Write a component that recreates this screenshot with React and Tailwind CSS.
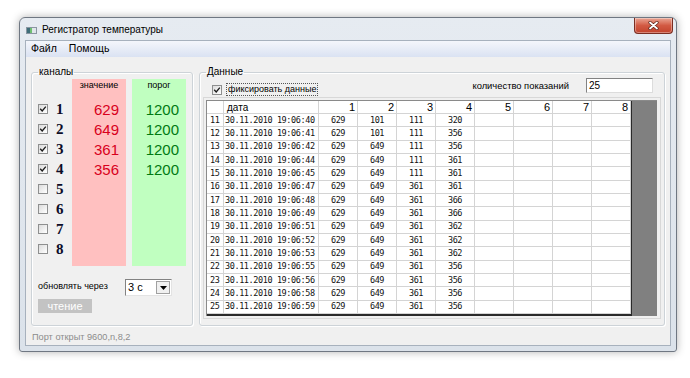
import React from "react";

const channels = [
  { n: 1, on: true, v: 629 },
  { n: 2, on: true, v: 649 },
  { n: 3, on: true, v: 361 },
  { n: 4, on: true, v: 356 },
  { n: 5, on: false },
  { n: 6, on: false },
  { n: 7, on: false },
  { n: 8, on: false },
];

const rows = [
  [11, "40", 629, 101, 111, 320],
  [12, "41", 629, 101, 111, 356],
  [13, "42", 629, 649, 111, 356],
  [14, "44", 629, 649, 111, 361],
  [15, "45", 629, 649, 111, 361],
  [16, "47", 629, 649, 361, 361],
  [17, "48", 629, 649, 361, 366],
  [18, "49", 629, 649, 361, 366],
  [19, "51", 629, 649, 361, 362],
  [20, "52", 629, 649, 361, 362],
  [21, "53", 629, 649, 361, 362],
  [22, "55", 629, 649, 361, 356],
  [23, "56", 629, 649, 361, 356],
  [24, "58", 629, 649, 361, 356],
  [25, "59", 629, 649, 361, 356],
];

const mono = "font-['DejaVu_Sans_Mono',monospace] text-[8.5px] tracking-[-0.4px] text-[#111]";

function Check({ on }) {
  return (
    <span className="flex h-[10px] w-[10px] shrink-0 items-center justify-center border border-[#8e8f8f] bg-gradient-to-br from-[#dcdcdc] to-white">
      {on && (
        <svg width="8" height="8" viewBox="0 0 8 8">
          <path d="M1.2 3.8 L3.2 6 L6.8 1.6" fill="none" stroke="#1a1a1a" strokeWidth="1.3" />
        </svg>
      )}
    </span>
  );
}

function Cell({ w, children, className = "" }) {
  return (
    <div className={"flex h-full shrink-0 items-center whitespace-nowrap border-r border-[#d4d4d4] " + w + " " + className}>
      {children}
    </div>
  );
}

export default function App() {
  return (
    <div className="h-[378px] w-[690px] bg-white pl-[19px] pt-[17px] font-['Liberation_Sans',sans-serif] text-black">
      <div className="flex h-[335px] w-[658px] flex-col rounded-t-[6px] rounded-b-[3px] border border-[#6f7782] bg-gradient-to-b from-[#e6ebf1] to-[#dbe2ea] shadow-[0_0_9px_rgba(0,0,0,0.3)]">
        {/* title bar */}
        <div className="flex h-[22px] shrink-0 items-start">
          <svg className="ml-[6px] mt-[9px]" width="11" height="7" viewBox="0 0 11 7">
            <rect x="0.5" y="0.5" width="10" height="6" fill="#dfe6ea" stroke="#8a96a2" />
            <rect x="1" y="1" width="3" height="5" fill="#3f6e78" />
            <rect x="4" y="1" width="2" height="5" fill="#6fbf72" />
          </svg>
          <span className="ml-[5px] mt-[5px] whitespace-nowrap text-[10px] leading-[14px]">Регистратор температуры</span>
          <div className="ml-auto mr-[3px] flex h-[16px] w-[39px] items-center justify-center rounded-b-[4px] border border-t-0 border-[#7a2e22] bg-gradient-to-b from-[#e9a594] via-[#d25a43] to-[#c2432c] shadow-[inset_0_0_0_1px_rgba(255,255,255,0.35)]">
            <svg width="11" height="9" viewBox="0 0 11 9">
              <path d="M2 1.5 L9 7.5 M9 1.5 L2 7.5" stroke="#5a2218" strokeWidth="3.2" strokeLinecap="round" />
              <path d="M2 1.5 L9 7.5 M9 1.5 L2 7.5" stroke="#ffffff" strokeWidth="1.8" strokeLinecap="round" />
            </svg>
          </div>
        </div>

        {/* client area */}
        <div className="mx-[5px] mb-[5px] flex flex-1 flex-col border border-[#a7b1bd] bg-[#f0f0f0]">
          <div className="flex h-[16px] shrink-0 items-center gap-[12px] bg-gradient-to-b from-[#f4f6fb] to-[#dae2f2] pl-[5px] text-[10.5px]">
            <span>Файл</span>
            <span>Помощь</span>
          </div>

          <div className="flex gap-[6px] px-[5px] pt-[9px]">
            {/* channels */}
            <fieldset className="h-[260px] w-[162px] rounded-[3px] border border-[#cdd3d8] shadow-[inset_1px_1px_0_#fff,1px_1px_0_#fff]">
              <legend className="ml-[6px] px-[1px] text-[10px] leading-[12px]">каналы</legend>
              <div className="flex pl-[6px] pt-[1px]">
                <div className="w-[34px] pt-[20px]">
                  {channels.map((c) => (
                    <div key={c.n} className="flex h-[20px] items-center gap-[8px]">
                      <Check on={c.on} />
                      <span className="font-['Liberation_Serif',serif] text-[15px] font-bold leading-none text-[#0c0c28]">{c.n}</span>
                    </div>
                  ))}
                </div>
                <div className="h-[187px] w-[54px] bg-[#ffc0c0] pr-[7px]">
                  <div className="h-[20px] pl-[7px] pt-[1px] text-center text-[9px] leading-[11px]">значение</div>
                  {channels.map((c) => (
                    <div key={c.n} className="flex h-[20px] items-center justify-end text-[15px] leading-none text-[#d8001c]">
                      {c.v}
                    </div>
                  ))}
                </div>
                <div className="ml-[6px] h-[187px] w-[54px] bg-[#c0ffc0] pr-[7px]">
                  <div className="h-[20px] pl-[7px] pt-[1px] text-center text-[9px] leading-[11px]">порог</div>
                  {channels.map((c) => (
                    <div key={c.n} className="flex h-[20px] items-center justify-end text-[15px] leading-none text-[#007a12]">
                      {c.on ? 1200 : ""}
                    </div>
                  ))}
                </div>
              </div>
              <div className="mt-[13px] flex items-center pl-[6px]">
                <span className="w-[87px] whitespace-nowrap pb-[3px] text-[9px] leading-[12px]">обновлять через</span>
                <div className="flex h-[17px] w-[47px] items-center border border-[#828282] border-b-[#e3e3e3] border-r-[#e3e3e3] bg-white">
                  <span className="pl-[2px] text-[11px] leading-none">3 с</span>
                  <div className="ml-auto mr-[1px] flex h-[13px] w-[14px] items-center justify-center border border-[#a0a0a0] bg-[#f0f0f0]">
                    <svg width="7" height="4" viewBox="0 0 7 4">
                      <path d="M0 0 H7 L3.5 4 Z" fill="#000" />
                    </svg>
                  </div>
                </div>
              </div>
              <div className="ml-[6px] mt-[3px] flex h-[14px] w-[54px] items-center justify-center bg-[#c3c3c3] text-[11px] leading-none text-white">
                чтение
              </div>
            </fieldset>

            {/* data */}
            <fieldset className="h-[260px] w-[466px] rounded-[3px] border border-[#cdd3d8] shadow-[inset_1px_1px_0_#fff,1px_1px_0_#fff]">
              <legend className="ml-[6px] px-[1px] text-[10px] leading-[12px]">Данные</legend>
              <div className="flex h-[19px] items-start">
                <div className="ml-[12px] mt-[5px] flex h-[13px] items-center">
                  <Check on />
                  <span className="ml-[4px] whitespace-nowrap border border-dotted border-[#555] px-[1px] text-[9px] leading-[11px]">фиксировать данные</span>
                </div>
                <span className="ml-auto mt-[2px] whitespace-nowrap text-[9.4px] leading-[12px]">количество показаний</span>
                <div className="ml-[17px] mr-[11px] flex h-[15px] w-[67px] items-center border border-[#828282] border-b-[#dcdcdc] border-r-[#dcdcdc] bg-white pl-[2px] text-[10px]">
                  25
                </div>
              </div>

              <div className="mx-[3px] border border-[#d8d8d8] p-[2px]">
                <div className="flex h-[216px] w-[451px] border-l border-t border-[#8a8a8a] bg-[#808080]">
                  <div className="flex w-[425px] flex-col border-b-2 border-r border-[#2a2a2a] bg-white">
                    <div className="flex h-[13px] shrink-0 border-b border-[#d4d4d4] text-[10px]">
                      <Cell w="w-[17px]" />
                      <Cell w="w-[95px]" className="pl-[3px]">дата</Cell>
                      {[1, 2, 3, 4, 5, 6, 7, 8].map((n) => (
                        <Cell key={n} w="w-[39px]" className="justify-end pr-[2px] text-[11px]">{n}</Cell>
                      ))}
                    </div>
                    {rows.map((r) => (
                      <div key={r[0]} className={"flex h-[13.33px] shrink-0 border-b border-[#d4d4d4] " + mono}>
                        <Cell w="w-[17px]" className="pl-[3px]">{r[0]}</Cell>
                        <Cell w="w-[95px]" className="pl-[1px]">30.11.2010 19:06:{r[1]}</Cell>
                        {[r[2], r[3], r[4], r[5], "", "", "", ""].map((v, i) => (
                          <Cell key={i} w="w-[39px]" className="justify-center">{v}</Cell>
                        ))}
                      </div>
                    ))}
                  </div>
                </div>
              </div>
            </fieldset>
          </div>

          <div className="pl-[6px] pt-[5px] text-[9.2px] leading-[12px] text-[#8c8c8c]">Порт открыт 9600,n,8,2</div>
        </div>
      </div>
    </div>
  );
}
